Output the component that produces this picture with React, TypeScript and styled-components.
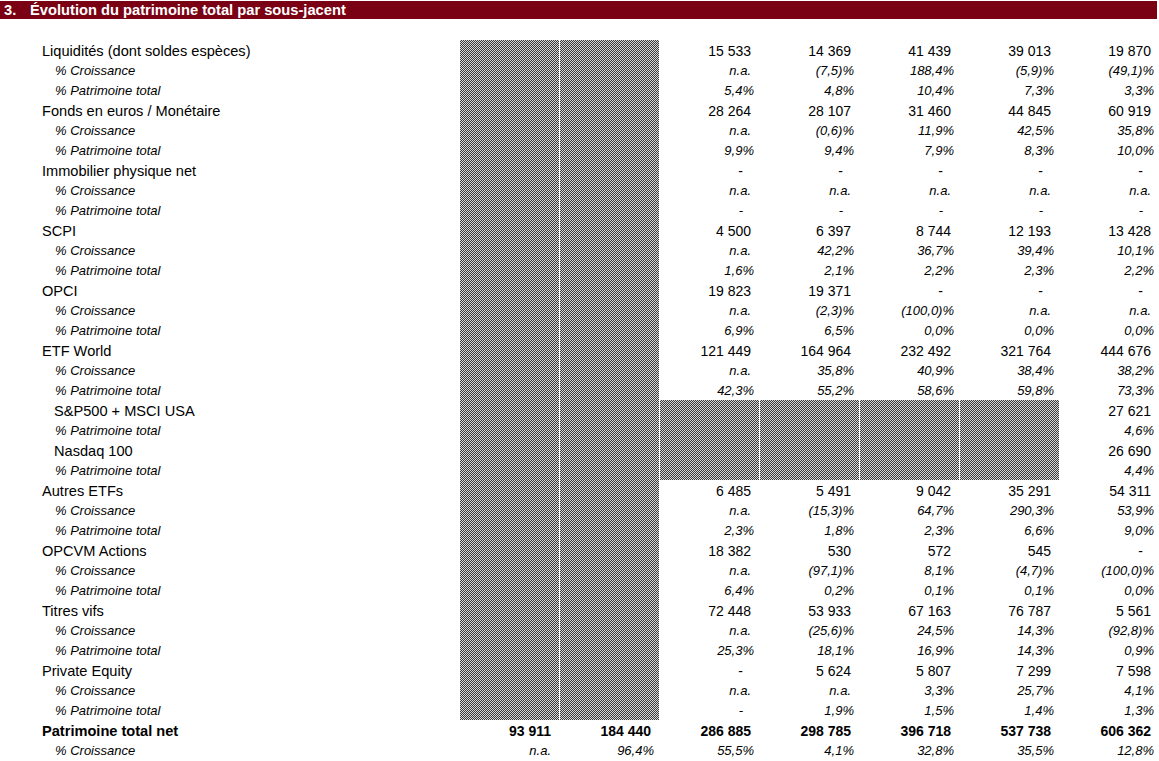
import React from "react";
import styled, { createGlobalStyle, css } from "styled-components";

const GlobalStyle = createGlobalStyle`
  html, body {
    margin: 0;
    padding: 0;
    background: #fff;
  }
  body {
    font-family: "Liberation Sans", Arial, sans-serif;
    color: #000;
  }
`;

const Page = styled.div`
  width: 1159px;
  padding-top: 1px;
`;

const SectionBar = styled.div`
  height: 18px;
  width: 1157px;
  background: #7a0014;
  color: #fff;
  font-weight: bold;
  font-size: 14.7px;
  line-height: 18px;
  display: flex;
  white-space: nowrap;
`;

const SectionNumber = styled.span`
  width: 30px;
  padding-left: 4px;
  box-sizing: border-box;
`;

const Sheet = styled.div`
  margin-top: 21px;
  display: grid;
  grid-template-columns: 459px repeat(7, 100px);
  grid-auto-rows: 20px;
`;

type Kind = "main" | "sub" | "item" | "total" | "totalSub";

const Label = styled.div<{ $kind: Kind }>`
  white-space: nowrap;
  box-sizing: border-box;
  line-height: 20px;
  ${({ $kind }) => {
    switch ($kind) {
      case "main":
        return css`
          padding: 1px 0 0 42px;
          font-size: 14.6px;
        `;
      case "total":
        return css`
          padding: 1px 0 0 42px;
          font-size: 14.6px;
          font-weight: bold;
        `;
      case "item":
        return css`
          padding: 1px 0 0 54px;
          font-size: 14.6px;
        `;
      default:
        return css`
          padding: 1px 0 0 55px;
          font-size: 13px;
          font-style: italic;
        `;
    }
  }}
`;

// excel "50% grey" fill: a 1px dark/light checker tile
const checker =
  "data:image/svg+xml,%3Csvg xmlns='http://www.w3.org/2000/svg' width='2' height='2' shape-rendering='crispEdges'%3E%3Crect width='2' height='2' fill='%23d8d8d8'/%3E%3Crect width='1' height='1' fill='%233a3a3a'/%3E%3Crect x='1' y='1' width='1' height='1' fill='%233a3a3a'/%3E%3C/svg%3E";

const hatch = css`
  background-color: #888;
  background-image: url("${checker}");
  background-size: 2px 2px;
  background-repeat: repeat;
  image-rendering: pixelated;
  box-shadow: inset 1px 0 0 #fff;
`;

const Cell = styled.div<{ $hatch: boolean; $small: boolean; $bold: boolean; $pad: number }>`
  box-sizing: border-box;
  white-space: nowrap;
  text-align: right;
  line-height: 20px;
  padding-right: ${({ $pad }) => $pad}px;
  padding-top: 1px;
  font-size: ${({ $small }) => ($small ? 13 : 14)}px;
  font-style: ${({ $small }) => ($small ? "italic" : "normal")};
  font-weight: ${({ $bold }) => ($bold ? "bold" : "normal")};
  ${({ $hatch }) => $hatch && hatch}
`;

type Row = {
  label: string;
  kind: Kind;
  values: string[];
  hatchTo?: number;
};

const dash = ["-", "-", "-", "-", "-"];
const na = ["n.a.", "n.a.", "n.a.", "n.a.", "n.a."];

const group = (label: string, values: string[], growth: string[], share: string[]): Row[] => [
  { label, kind: "main", values: ["", "", ...values] },
  { label: "% Croissance", kind: "sub", values: ["", "", ...growth] },
  { label: "% Patrimoine total", kind: "sub", values: ["", "", ...share] },
];

const rows: Row[] = [
  ...group(
    "Liquidités (dont soldes espèces)",
    ["15 533", "14 369", "41 439", "39 013", "19 870"],
    ["n.a.", "(7,5)%", "188,4%", "(5,9)%", "(49,1)%"],
    ["5,4%", "4,8%", "10,4%", "7,3%", "3,3%"]
  ),
  ...group(
    "Fonds en euros / Monétaire",
    ["28 264", "28 107", "31 460", "44 845", "60 919"],
    ["n.a.", "(0,6)%", "11,9%", "42,5%", "35,8%"],
    ["9,9%", "9,4%", "7,9%", "8,3%", "10,0%"]
  ),
  ...group("Immobilier physique net", dash, na, dash),
  ...group(
    "SCPI",
    ["4 500", "6 397", "8 744", "12 193", "13 428"],
    ["n.a.", "42,2%", "36,7%", "39,4%", "10,1%"],
    ["1,6%", "2,1%", "2,2%", "2,3%", "2,2%"]
  ),
  ...group(
    "OPCI",
    ["19 823", "19 371", "-", "-", "-"],
    ["n.a.", "(2,3)%", "(100,0)%", "n.a.", "n.a."],
    ["6,9%", "6,5%", "0,0%", "0,0%", "0,0%"]
  ),
  ...group(
    "ETF World",
    ["121 449", "164 964", "232 492", "321 764", "444 676"],
    ["n.a.", "35,8%", "40,9%", "38,4%", "38,2%"],
    ["42,3%", "55,2%", "58,6%", "59,8%", "73,3%"]
  ),
  { label: "S&P500 + MSCI USA", kind: "item", values: ["", "", "", "", "", "", "27 621"], hatchTo: 6 },
  { label: "% Patrimoine total", kind: "sub", values: ["", "", "", "", "", "", "4,6%"], hatchTo: 6 },
  { label: "Nasdaq 100", kind: "item", values: ["", "", "", "", "", "", "26 690"], hatchTo: 6 },
  { label: "% Patrimoine total", kind: "sub", values: ["", "", "", "", "", "", "4,4%"], hatchTo: 6 },
  ...group(
    "Autres ETFs",
    ["6 485", "5 491", "9 042", "35 291", "54 311"],
    ["n.a.", "(15,3)%", "64,7%", "290,3%", "53,9%"],
    ["2,3%", "1,8%", "2,3%", "6,6%", "9,0%"]
  ),
  ...group(
    "OPCVM Actions",
    ["18 382", "530", "572", "545", "-"],
    ["n.a.", "(97,1)%", "8,1%", "(4,7)%", "(100,0)%"],
    ["6,4%", "0,2%", "0,1%", "0,1%", "0,0%"]
  ),
  ...group(
    "Titres vifs",
    ["72 448", "53 933", "67 163", "76 787", "5 561"],
    ["n.a.", "(25,6)%", "24,5%", "14,3%", "(92,8)%"],
    ["25,3%", "18,1%", "16,9%", "14,3%", "0,9%"]
  ),
  ...group(
    "Private Equity",
    ["-", "5 624", "5 807", "7 299", "7 598"],
    ["n.a.", "n.a.", "3,3%", "25,7%", "4,1%"],
    ["-", "1,9%", "1,5%", "1,4%", "1,3%"]
  ),
  {
    label: "Patrimoine total net",
    kind: "total",
    values: ["93 911", "184 440", "286 885", "298 785", "396 718", "537 738", "606 362"],
    hatchTo: 0,
  },
  {
    label: "% Croissance",
    kind: "totalSub",
    values: ["n.a.", "96,4%", "55,5%", "4,1%", "32,8%", "35,5%", "12,8%"],
    hatchTo: 0,
  },
];

// padding right depends on the excel number format
const padFor = (v: string) => {
  if (v === "-") return 16;
  if (v === "n.a.") return 8;
  if (v.endsWith("%")) return 5;
  return 8;
};

const isHatched = (row: Row, col: number) => {
  if (row.hatchTo === 0) return false;
  if (col < 2) return true;
  return row.hatchTo !== undefined && col < row.hatchTo;
};

const App: React.FC = () => {
  return (
    <>
      <GlobalStyle />
      <Page>
        <SectionBar>
          <SectionNumber>3.</SectionNumber>
          <span>Évolution du patrimoine total par sous-jacent</span>
        </SectionBar>
        <Sheet>
          {rows.map((row, r) => (
            <React.Fragment key={r}>
              <Label $kind={row.kind}>{row.label}</Label>
              {row.values.map((v, c) => (
                <Cell
                  key={c}
                  $hatch={isHatched(row, c)}
                  $small={row.kind === "sub" || row.kind === "totalSub"}
                  $bold={row.kind === "total"}
                  $pad={padFor(v)}
                >
                  {v}
                </Cell>
              ))}
            </React.Fragment>
          ))}
        </Sheet>
      </Page>
    </>
  );
};

export default App;
